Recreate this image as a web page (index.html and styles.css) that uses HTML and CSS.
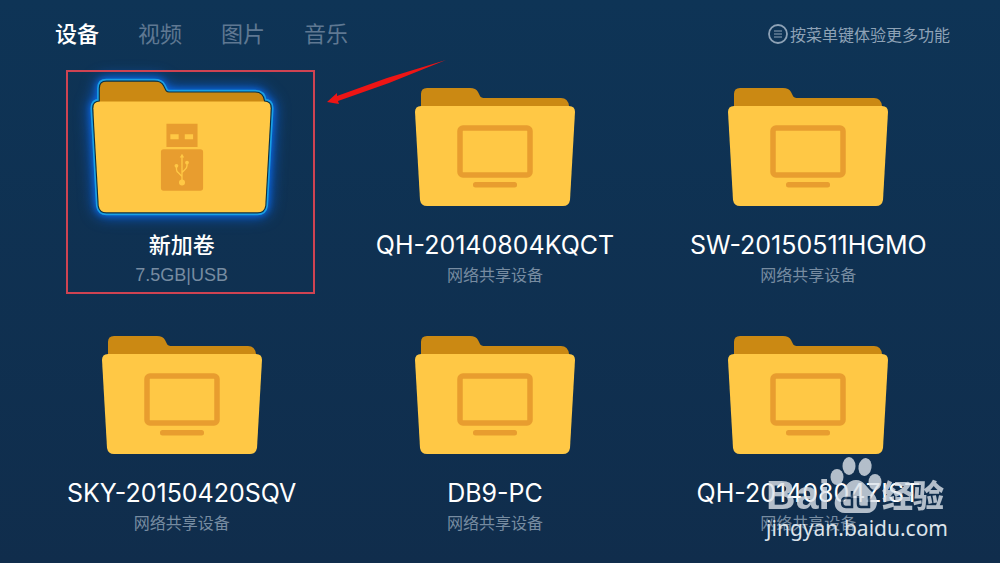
FILE: index.html
```html
<!DOCTYPE html>
<html lang="zh-CN">
<head>
    <meta charset="UTF-8" />
    <meta name="viewport" content="width=device-width, initial-scale=1.0"/>
    <title>设备</title>
    <link rel="stylesheet" href="styles.css">
</head>
<body>
    <!-- SHARED ICONS -->
    <svg class="sprite" aria-hidden="true">
        <symbol id="folder" viewBox="0 0 160 118">
            <path fill="#cb8913" d="M6 30V6Q6 0 12 0H55Q61 0 63 4L65 8Q66 10 70 10H146Q153 10 154 18V30Z"/>
            <path fill="#ffc845" d="M6 18H154Q160 18 160 24L155 112Q154 118 148 118H12Q6 118 5 112L0 24Q0 18 6 18Z"/>
        </symbol>
        <symbol id="pc" viewBox="0 0 160 118">
            <use href="#folder" width="160" height="118"/>
            <rect x="45" y="40" width="70" height="47" rx="3" fill="none" stroke="#e89d2f" stroke-width="5.5"/>
            <rect x="58" y="94" width="44" height="5.5" rx="2.5" fill="#e89d2f"/>
        </symbol>
    </svg>

    <!-- HEADER -->
    <header class="header">
        <nav class="tabs">
            <a class="active" href="#device">设备</a>
            <a href="#video">视频</a>
            <a href="#picture">图片</a>
            <a href="#music">音乐</a>
        </nav>
        <p class="hint">
            <svg width="20" height="20" viewBox="0 0 20 20" fill="none" stroke="currentColor">
                <circle cx="10" cy="10" r="9" stroke-width="1.8"/>
                <path d="M6 7H14M6 10H14M6 13H14" stroke-width="1.2"/>
            </svg>
            <span>按菜单键体验更多功能</span>
        </p>
    </header>

    <!-- DEVICES -->
    <main class="grid" id="device">
        <a class="card selected" href="#usb">
            <svg class="folder" viewBox="0 0 160 118">
                <g class="glow" fill="#1a9fe4" stroke="#1a9fe4" stroke-width="5" stroke-linejoin="round">
                    <path d="M6 30V6Q6 0 12 0H55Q61 0 63 4L65 8Q66 10 70 10H146Q153 10 154 18V30Z"/>
                    <path d="M6 18H154Q160 18 160 24L155 112Q154 118 148 118H12Q6 118 5 112L0 24Q0 18 6 18Z"/>
                </g>
                <g stroke="#0b3043" stroke-width="2" stroke-linejoin="round">
                    <path d="M6 30V6Q6 0 12 0H55Q61 0 63 4L65 8Q66 10 70 10H146Q153 10 154 18V30Z"/>
                    <path d="M6 18H154Q160 18 160 24L155 112Q154 118 148 118H12Q6 118 5 112L0 24Q0 18 6 18Z"/>
                </g>
                <use href="#folder" width="160" height="118"/>
                <path fill="#e89d2f" fill-rule="evenodd" d="M66 38H94V59H66ZM69.5 47.5V52H77V47.5ZM82.5 47.5V52H90V47.5Z"/>
                <rect x="61" y="61" width="38" height="37.5" rx="2.5" fill="#e89d2f"/>
                <g fill="none" stroke="#ffc845" stroke-width="1.2">
                    <path d="M80 67V91M75 76V79Q75 81 77 82.5L80 85.5M84.5 73V76Q84.5 78 82.5 79.5L80 82"/>
                </g>
                <g fill="#ffc845">
                    <path d="M80 65L82 68.5H78Z"/>
                    <circle cx="80" cy="91" r="2.7"/>
                    <circle cx="75" cy="76" r="1.7"/>
                    <circle cx="84.5" cy="73" r="1.7"/>
                </g>
            </svg>
            <h2>新加卷</h2>
            <p>7.5GB|USB</p>
            <span class="marker"></span>
            <svg class="arrow" viewBox="0 0 120 46">
                <path fill="#ed1515" d="M0 42L10 33V36L60 18L119 0L62 23L11 41L12 44Z"/>
            </svg>
        </a>
        <a class="card" href="#d2">
            <svg class="folder"><use href="#pc"/></svg>
            <h2>QH-20140804KQCT</h2>
            <p>网络共享设备</p>
        </a>
        <a class="card" href="#d3">
            <svg class="folder"><use href="#pc"/></svg>
            <h2>SW-20150511HGMO</h2>
            <p>网络共享设备</p>
        </a>
        <a class="card" href="#d4">
            <svg class="folder"><use href="#pc"/></svg>
            <h2>SKY-20150420SQV</h2>
            <p>网络共享设备</p>
        </a>
        <a class="card" href="#d5">
            <svg class="folder"><use href="#pc"/></svg>
            <h2>DB9-PC</h2>
            <p>网络共享设备</p>
        </a>
        <a class="card" href="#d6">
            <svg class="folder"><use href="#pc"/></svg>
            <h2>QH-20140804ZIST</h2>
            <p>网络共享设备</p>
        </a>
    </main>

    <!-- WATERMARK -->
    <div class="watermark">
        <div class="logo">
            <span class="bai">Bai</span>
            <svg width="52" height="56" viewBox="0 0 52 56">
                <g fill="currentColor">
                    <ellipse cx="7" cy="20" rx="6.5" ry="8"/>
                    <ellipse cx="19" cy="9" rx="6.5" ry="9"/>
                    <ellipse cx="35" cy="10" rx="6.5" ry="9" transform="rotate(10 35 10)"/>
                    <ellipse cx="45" cy="25" rx="6.5" ry="8"/>
                    <path d="M26 23C34 23 36 30 42 35C51 43 47 56 37 56H15C4 56 1 43 10 35C16 30 18 23 26 23Z"/>
                </g>
                <path fill="none" stroke="#112e4d" stroke-width="2.5" d="M22 34V50H16Q12 50 12 45Q12 41 16 41H22M28 39V47Q28 50 31 50H39V39"/>
            </svg>
            <span class="exp">经验</span>
        </div>
        <p>jingyan.baidu.com</p>
    </div>
</body>
</html>
```
FILE: styles.css
```css
* {
    margin: 0;
    padding: 0;
    box-sizing: border-box;
}

body {
    min-height: 100vh;
    position: relative;
    background: linear-gradient(#0e3456, #102d4c);
    color: white;
    font-family: Inter, "Noto Sans CJK SC", sans-serif;
}

a {
    color: inherit;
    text-decoration: none;
}

.sprite {
    position: absolute;
    width: 0;
    height: 0;
}

.header {
    display: flex;
    align-items: center;
    justify-content: space-between;
    height: 64px;
    padding: 0 50px 0 55px;
}

.tabs {
    display: flex;
    gap: 39px;
    font-size: 22px;
    color: #5f7892;
}

.tabs .active {
    color: white;
    font-weight: 500;
}

.hint {
    display: flex;
    align-items: center;
    gap: 2px;
    padding-top: 4px;
    font-size: 16px;
    color: #8ea2b6;
}

.grid {
    display: grid;
    grid-template-columns: repeat(3, 1fr);
    row-gap: 48px;
    padding: 24px 35px 0 25px;
}

.card {
    position: relative;
    display: flex;
    flex-direction: column;
    align-items: center;
}

.folder {
    width: 160px;
    height: 118px;
    margin-bottom: 22px;
    overflow: visible;
}

.card h2 {
    font-size: 25px;
    line-height: 34px;
    font-weight: 400;
}

.card p {
    font-size: 16px;
    line-height: 26px;
    color: #778ca1;
}

.selected .folder {
    transform: scale(1.11);
}

.selected h2 {
    font-size: 22px;
    font-weight: 500;
}

.selected p {
    font-family: "Liberation Sans", sans-serif;
    font-size: 18px;
}

.glow {
    filter: drop-shadow(0 0 3px #0a66e0) drop-shadow(0 0 6px #0a5fd8);
}

/* red frame and arrow over the selected device */
.marker {
    position: absolute;
    top: -18px;
    left: 41px;
    width: 249px;
    height: 224px;
    border: 2px solid #cf4352;
}

.arrow {
    position: absolute;
    top: -28px;
    left: 302px;
    width: 120px;
    height: 46px;
}

.watermark {
    position: absolute;
    right: 52px;
    bottom: 20px;
    color: #dce3ea;
}

.logo {
    display: flex;
    align-items: flex-end;
    height: 56px;
    opacity: 0.8;
}

.bai {
    font: bold 41px/36px "Liberation Sans", sans-serif;
}

.exp {
    font-size: 31px;
    line-height: 34px;
    font-weight: 900;
}

.watermark p {
    font-family: "Noto Sans", sans-serif;
    font-size: 21px;
    line-height: 30px;
}
```
